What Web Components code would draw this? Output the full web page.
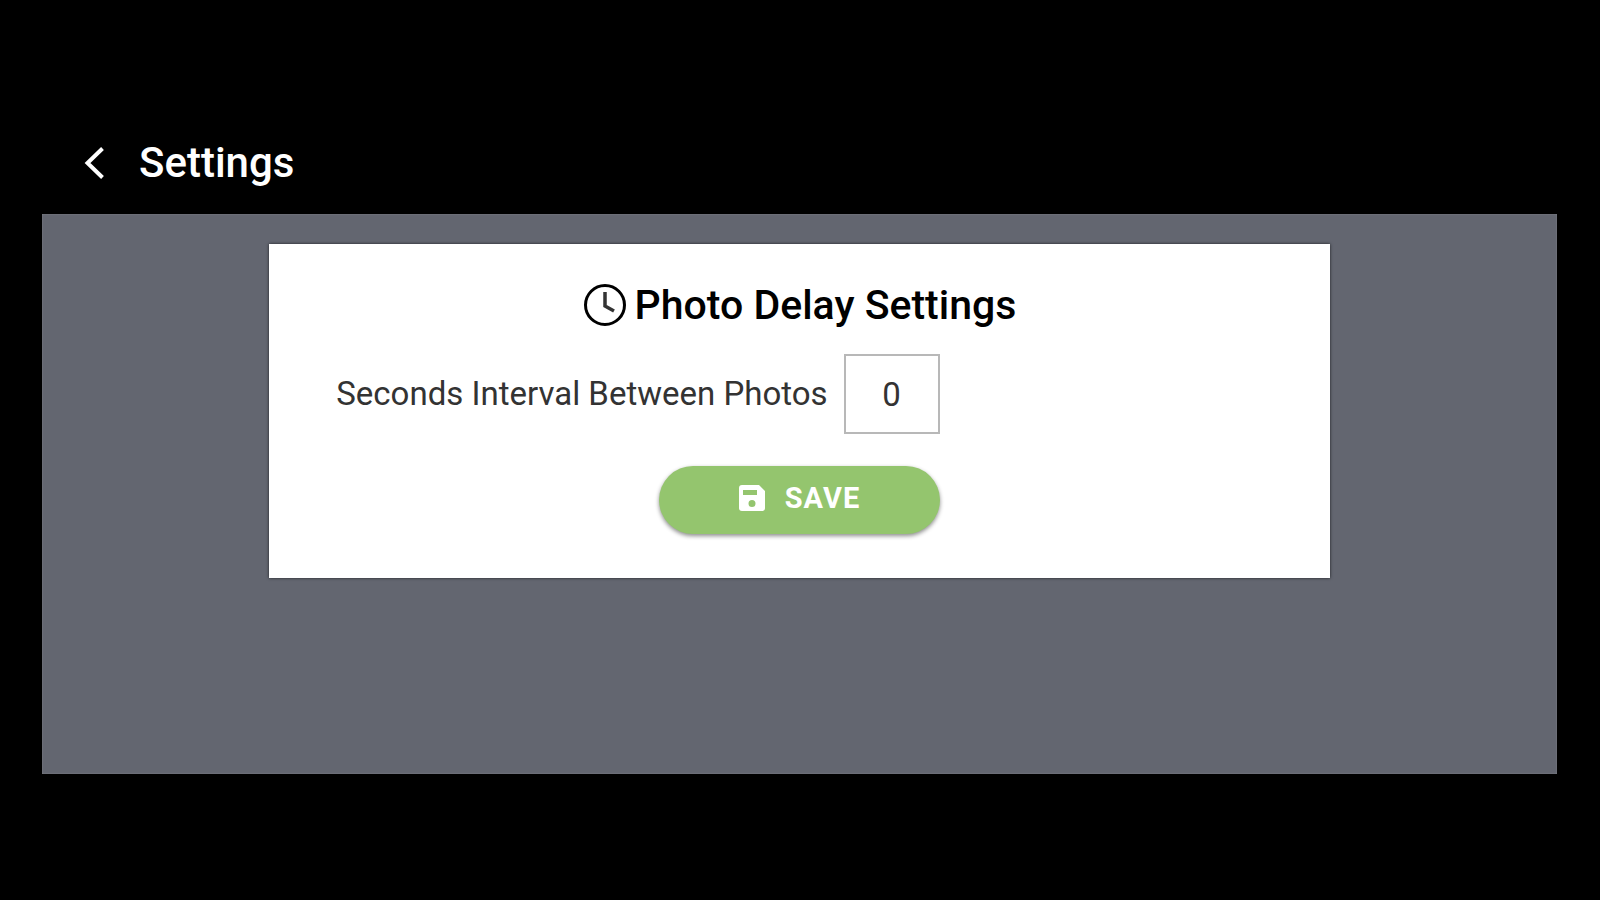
<!DOCTYPE html>
<html lang="en">
<head>
<meta charset="utf-8">
<meta name="viewport" content="width=device-width, initial-scale=1">
<title>Settings</title>
<style>
html, body { margin: 0; min-height: 100vh; background: #000; font-family: Roboto, "Liberation Sans", sans-serif; }
</style>
</head>
<body>
<settings-page>
  <page-header slot="header">Settings</page-header>
  <settings-card>
    <card-title slot="title">Photo Delay Settings</card-title>
    <number-field label="Seconds Interval Between Photos" value="0"></number-field>
    <save-button slot="action">Save</save-button>
  </settings-card>
</settings-page>
<script>
class Base extends HTMLElement {
  constructor() {
    super();
    this.attachShadow({ mode: "open" }).innerHTML = this.template();
  }
}

customElements.define("settings-page", class extends Base {
  template() {
    return `<style>
      :host { display: flex; flex-direction: column; box-sizing: border-box; min-height: 100vh; padding: 112px 43px 126px 42px; }
      main { flex: 1; box-sizing: border-box; padding: 30px 15%; background: #636670; box-shadow: inset 0 0 2px #85878c; }
    </style>
    <slot name="header"></slot>
    <main><slot></slot></main>`;
  }
});

customElements.define("page-header", class extends Base {
  template() {
    return `<style>
      :host { display: flex; align-items: center; gap: 32px; height: 102px; padding-left: 41px; color: #fff; }
      button { display: flex; padding: 0; border: 0; background: none; color: inherit; cursor: pointer; }
      h1 { margin: 0; font-size: 42px; line-height: 48px; font-weight: 500; }
    </style>
    <button type="button" aria-label="Back">
      <svg width="24" height="36" viewBox="0 0 24 36" fill="none" stroke="currentColor" stroke-width="4"><path d="M19.500 3.500 4.500 18 19.500 32.500"/></svg>
    </button>
    <h1><slot></slot></h1>`;
  }
});

customElements.define("settings-card", class extends Base {
  template() {
    return `<style>
      :host { display: flex; flex-direction: column; align-items: center; padding: 36px 67px 44px; background: #fff; color: #000; box-shadow: 0 0 3px rgba(0,0,0,.7); }
      .row { align-self: stretch; margin: 24px 0 32px; }
    </style>
    <slot name="title"></slot>
    <div class="row"><slot></slot></div>
    <slot name="action"></slot>`;
  }
});

customElements.define("card-title", class extends Base {
  template() {
    return `<style>
      :host { display: flex; align-items: center; gap: 8px; }
      h2 { margin: 0; font-size: 41px; line-height: 50px; font-weight: 500; }
    </style>
    <svg width="44" height="44" viewBox="0 0 44 44" fill="none" stroke="currentColor" stroke-width="3" aria-hidden="true"><circle cx="22" cy="22" r="19.500"/><path d="M22 9v14l9 5" stroke-width="3.500" stroke="#333"/></svg>
    <h2><slot></slot></h2>`;
  }
});

customElements.define("number-field", class extends Base {
  template() {
    return `<style>
      :host { display: flex; align-items: center; gap: 16px; color: #333; }
      label { font-size: 33px; line-height: 40px; }
      input { box-sizing: border-box; width: 96px; height: 80px; padding: 0; border: 2px solid #b8b8b8; border-radius: 0; background: #fff; color: inherit; font: 33px/40px Roboto, sans-serif; text-align: center; }
    </style>
    <label for="value"></label>
    <input id="value" type="text" inputmode="numeric">`;
  }
  connectedCallback() {
    this.shadowRoot.querySelector("label").textContent = this.getAttribute("label");
    this.shadowRoot.querySelector("input").value = this.getAttribute("value");
  }
});

customElements.define("save-button", class extends Base {
  template() {
    return `<style>
      :host { display: block; }
      button { display: flex; align-items: center; justify-content: center; gap: 20px; width: 281px; height: 68px; padding: 0 0 4px; border: 0; border-radius: 34px; background: #94c56e; color: #fff; font: 700 29px/32px Roboto, sans-serif; letter-spacing: 1px; text-transform: uppercase; box-shadow: 0 2px 4px rgba(0,0,0,.45); cursor: pointer; }
    </style>
    <button type="button">
      <svg width="26" height="26" viewBox="0 0 26 26" fill="currentColor" aria-hidden="true"><path fill-rule="evenodd" d="M3 0H20L26 6V23Q26 26 23 26H3Q0 26 0 23V3Q0 0 3 0ZM4 5V10H18V5ZM13 15a3.500 3.500 0 1 0 0 7a3.500 3.500 0 1 0 0-7Z"/></svg>
      <span><slot></slot></span>
    </button>`;
  }
});
</script>
</body>
</html>
